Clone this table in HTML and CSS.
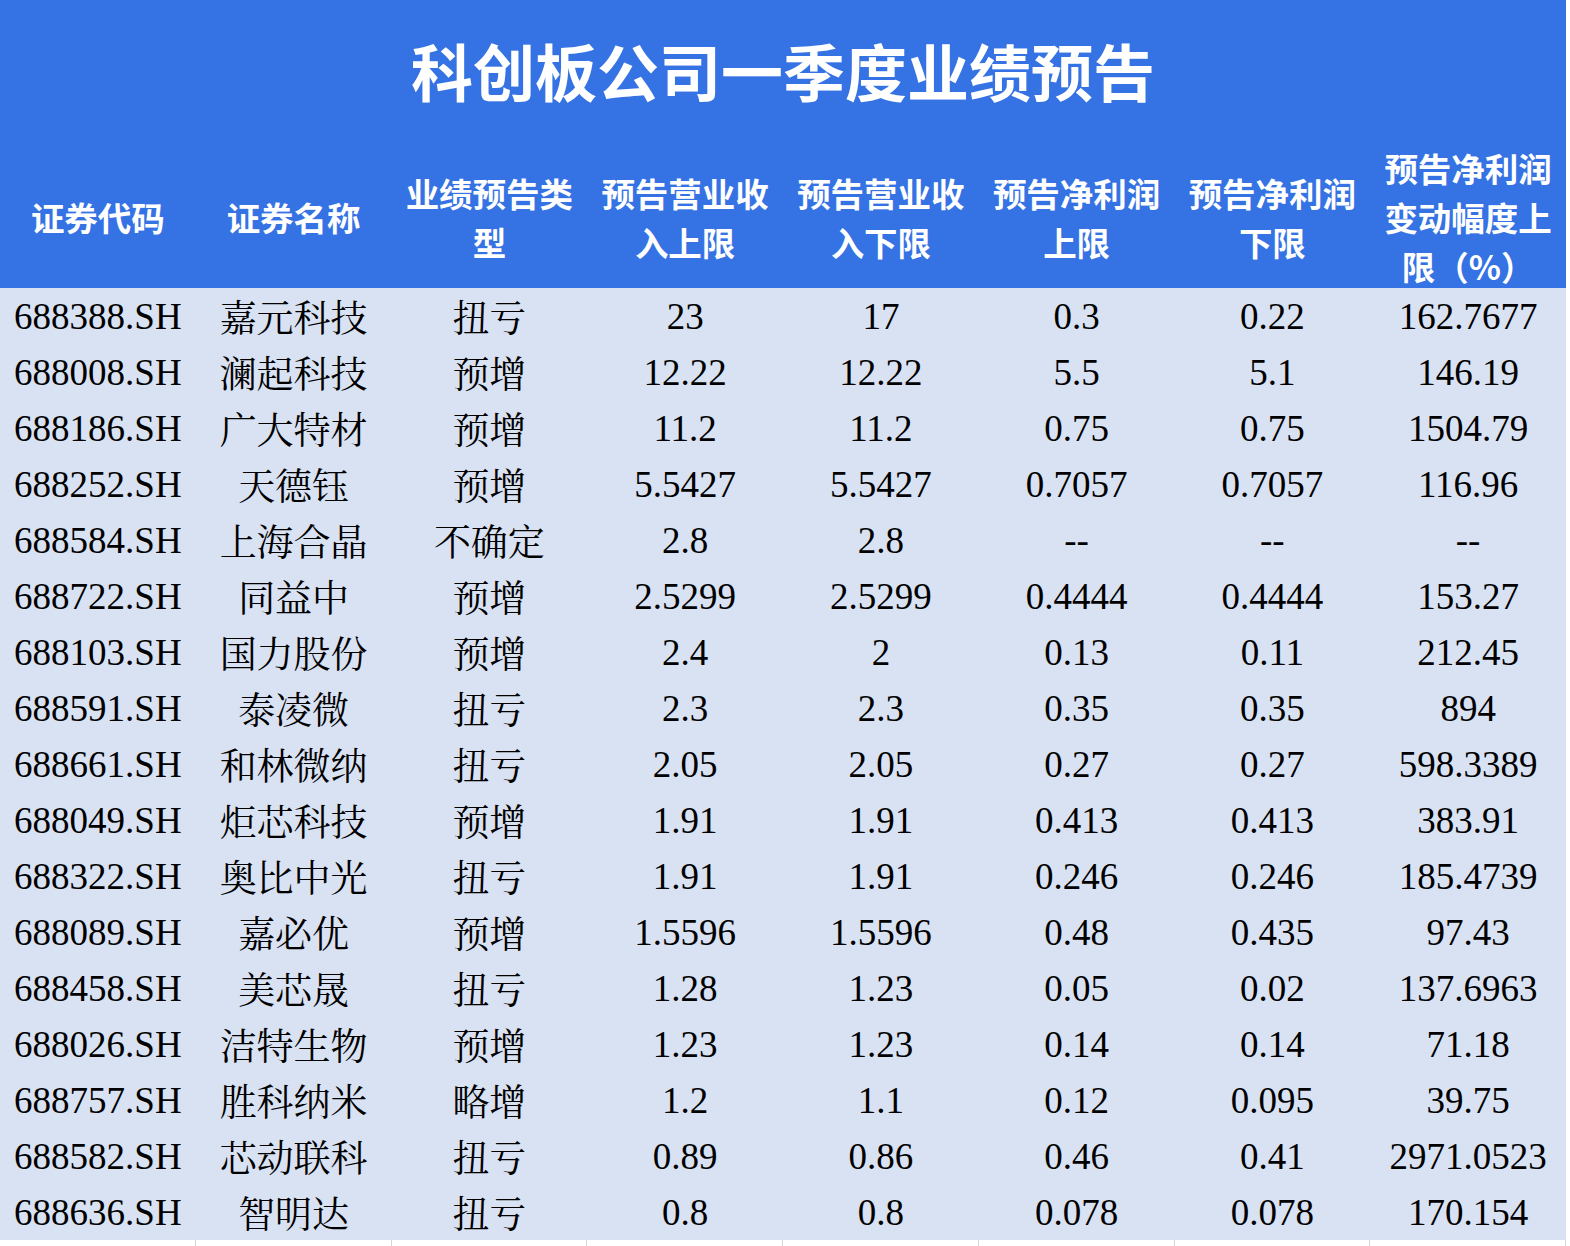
FILE: index.html
```html
<!DOCTYPE html>
<html lang="zh-CN">
<head>
<meta charset="utf-8">
<title>科创板公司一季度业绩预告</title>
<link rel="stylesheet" href="styles.css">
</head>
<body>
<div class="sheet">
  <div class="title">科创板公司一季度业绩预告</div>
  <div class="grid head">
    <div class="hc">证券代码</div>
    <div class="hc">证券名称</div>
    <div class="hc">业绩预告类<br>型</div>
    <div class="hc">预告营业收<br>入上限</div>
    <div class="hc">预告营业收<br>入下限</div>
    <div class="hc">预告净利润<br>上限</div>
    <div class="hc">预告净利润<br>下限</div>
    <div class="hc">预告净利润<br>变动幅度上<br>限（%）</div>
  </div>
  <div class="body">
    <div class="grid row"><div>688388.SH</div><div>嘉元科技</div><div>扭亏</div><div>23</div><div>17</div><div>0.3</div><div>0.22</div><div>162.7677</div></div>
    <div class="grid row"><div>688008.SH</div><div>澜起科技</div><div>预增</div><div>12.22</div><div>12.22</div><div>5.5</div><div>5.1</div><div>146.19</div></div>
    <div class="grid row"><div>688186.SH</div><div>广大特材</div><div>预增</div><div>11.2</div><div>11.2</div><div>0.75</div><div>0.75</div><div>1504.79</div></div>
    <div class="grid row"><div>688252.SH</div><div>天德钰</div><div>预增</div><div>5.5427</div><div>5.5427</div><div>0.7057</div><div>0.7057</div><div>116.96</div></div>
    <div class="grid row"><div>688584.SH</div><div>上海合晶</div><div>不确定</div><div>2.8</div><div>2.8</div><div>--</div><div>--</div><div>--</div></div>
    <div class="grid row"><div>688722.SH</div><div>同益中</div><div>预增</div><div>2.5299</div><div>2.5299</div><div>0.4444</div><div>0.4444</div><div>153.27</div></div>
    <div class="grid row"><div>688103.SH</div><div>国力股份</div><div>预增</div><div>2.4</div><div>2</div><div>0.13</div><div>0.11</div><div>212.45</div></div>
    <div class="grid row"><div>688591.SH</div><div>泰凌微</div><div>扭亏</div><div>2.3</div><div>2.3</div><div>0.35</div><div>0.35</div><div>894</div></div>
    <div class="grid row"><div>688661.SH</div><div>和林微纳</div><div>扭亏</div><div>2.05</div><div>2.05</div><div>0.27</div><div>0.27</div><div>598.3389</div></div>
    <div class="grid row"><div>688049.SH</div><div>炬芯科技</div><div>预增</div><div>1.91</div><div>1.91</div><div>0.413</div><div>0.413</div><div>383.91</div></div>
    <div class="grid row"><div>688322.SH</div><div>奥比中光</div><div>扭亏</div><div>1.91</div><div>1.91</div><div>0.246</div><div>0.246</div><div>185.4739</div></div>
    <div class="grid row"><div>688089.SH</div><div>嘉必优</div><div>预增</div><div>1.5596</div><div>1.5596</div><div>0.48</div><div>0.435</div><div>97.43</div></div>
    <div class="grid row"><div>688458.SH</div><div>美芯晟</div><div>扭亏</div><div>1.28</div><div>1.23</div><div>0.05</div><div>0.02</div><div>137.6963</div></div>
    <div class="grid row"><div>688026.SH</div><div>洁特生物</div><div>预增</div><div>1.23</div><div>1.23</div><div>0.14</div><div>0.14</div><div>71.18</div></div>
    <div class="grid row"><div>688757.SH</div><div>胜科纳米</div><div>略增</div><div>1.2</div><div>1.1</div><div>0.12</div><div>0.095</div><div>39.75</div></div>
    <div class="grid row"><div>688582.SH</div><div>芯动联科</div><div>扭亏</div><div>0.89</div><div>0.86</div><div>0.46</div><div>0.41</div><div>2971.0523</div></div>
    <div class="grid row"><div>688636.SH</div><div>智明达</div><div>扭亏</div><div>0.8</div><div>0.8</div><div>0.078</div><div>0.078</div><div>170.154</div></div>
  </div>
  <div class="grid foot">
    <div></div><div></div><div></div><div></div><div></div><div></div><div></div><div></div>
  </div>
</div>
</body>
</html>
```

FILE: styles.css
```css
html, body {
  margin: 0;
  padding: 0;
  background: #ffffff;
}

.sheet {
  width: 1566px;
}

.title {
  height: 143px;
  box-sizing: border-box;
  padding-bottom: 4px;
  background: #3572e3;
  color: #ffffff;
  font-family: "Noto Sans CJK SC", sans-serif;
  font-weight: 700;
  font-size: 62px;
  display: flex;
  align-items: center;
  justify-content: center;
}

.grid {
  display: grid;
  grid-template-columns: repeat(8, 1fr);
}

.head {
  height: 145px;
  box-sizing: border-box;
  padding-bottom: 4px;
  background: #3572e3;
  color: #ffffff;
  font-family: "Noto Sans CJK SC", sans-serif;
  font-weight: 700;
  font-size: 33.5px;
  line-height: 49px;
}

.hc {
  display: flex;
  align-items: center;
  justify-content: center;
  text-align: center;
}

.body {
  background: #d9e2f3;
}

.row {
  height: 56px;
  font-family: "Liberation Serif", "Noto Serif CJK SC", "Noto Sans CJK SC", serif;
  font-size: 37px;
  color: #000000;
}

.row > div {
  display: flex;
  align-items: center;
  justify-content: center;
  white-space: nowrap;
}

.foot {
  height: 6px;
}

.foot > div {
  border-right: 1px solid #d6d6d6;
}
```
